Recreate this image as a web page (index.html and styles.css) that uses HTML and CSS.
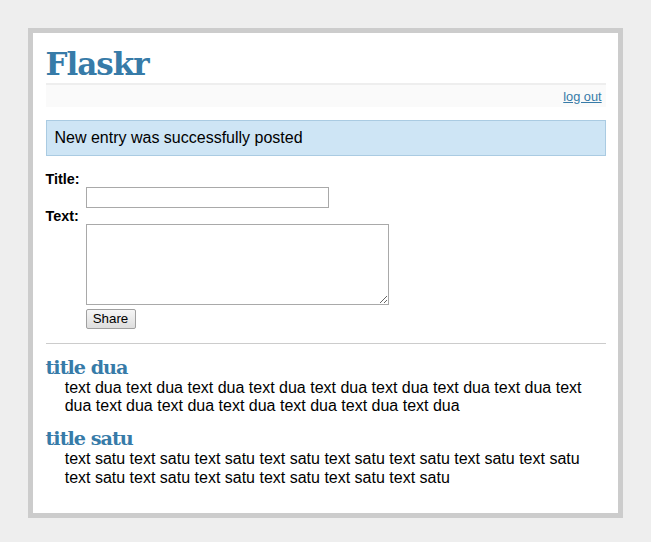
FILE: index.html
```html
<!DOCTYPE html>
<html>
<head>
<meta charset="utf-8">
<title>Flaskr</title>
<link rel="stylesheet" href="styles.css">
</head>
<body>
<div class="page">
  <h1>Flaskr</h1>
  <div class="metanav"><a href="#">log out</a></div>
  <div class="flash">New entry was successfully posted</div>
  <form class="add-entry">
    <dl>
      <dt>Title:</dt>
      <dd><input type="text" class="field" name="title"></dd>
      <dt>Text:</dt>
      <dd><textarea class="area" name="text"></textarea></dd>
      <dd><button type="button" class="btn">Share</button></dd>
    </dl>
  </form>
  <ul class="entries">
    <li><h2>title dua</h2>text dua text dua text dua text dua text dua text dua text dua text dua text dua text dua text dua text dua text dua text dua text dua</li>
    <li><h2>title satu</h2>text satu text satu text satu text satu text satu text satu text satu text satu text satu text satu text satu text satu text satu text satu</li>
  </ul>
</div>
</body>
</html>
```
FILE: styles.css
```css
html, body { margin: 0; }
body { font-family: "Liberation Sans", Arial, sans-serif; font-size: 16px; background: #eee; color: #000; }
a, h1, h2 { color: #377BA8; }
h1, h2 { font-family: "DejaVu Serif", Georgia, serif; margin: 0; }
h1 { font-size: 31px; line-height: 37px; border-bottom: 2px solid #eee; letter-spacing: -1px; }
h2 { font-size: 19.2px; line-height: 22px; letter-spacing: -1px; }

.page { margin: 28px auto; width: 560px; border: 5px solid #ccc; padding: 12.8px; background: #fff; }
.metanav { text-align: right; font-size: 12.8px; padding: 3.84px; margin-bottom: 12.8px; background: #fafafa; }
.flash { background: #CEE5F5; padding: 8px; border: 1px solid #AACBE2; }

.add-entry { font-size: 14.4px; border-bottom: 1px solid #ccc; }
.add-entry dl { font-weight: bold; margin: 14.4px 0; }
.add-entry dd { margin-left: 40px; }
.field { box-sizing: border-box; width: 243px; height: 21px; border: 1px solid #a9a9a9; padding: 1px 2px; margin: 0; vertical-align: baseline; }
.area { box-sizing: border-box; width: 303px; height: 81px; border: 1px solid #a9a9a9; margin: 0 0 1px; padding: 2px; vertical-align: baseline; }
.btn { box-sizing: border-box; width: 50px; height: 20px; margin: 0; padding: 0 4px; font-family: "Liberation Sans", Arial, sans-serif; font-size: 13.33px; color: #000; border: 1px solid #a0a0a0; border-radius: 2px; background: linear-gradient(#f6f6f6, #dedede); }

.entries { list-style: none; margin: 0; padding: 0; }
.entries li { margin: 12.8px 19.2px; line-height: 18.4px; }
.entries li h2 { margin-left: -19.2px; }
```
